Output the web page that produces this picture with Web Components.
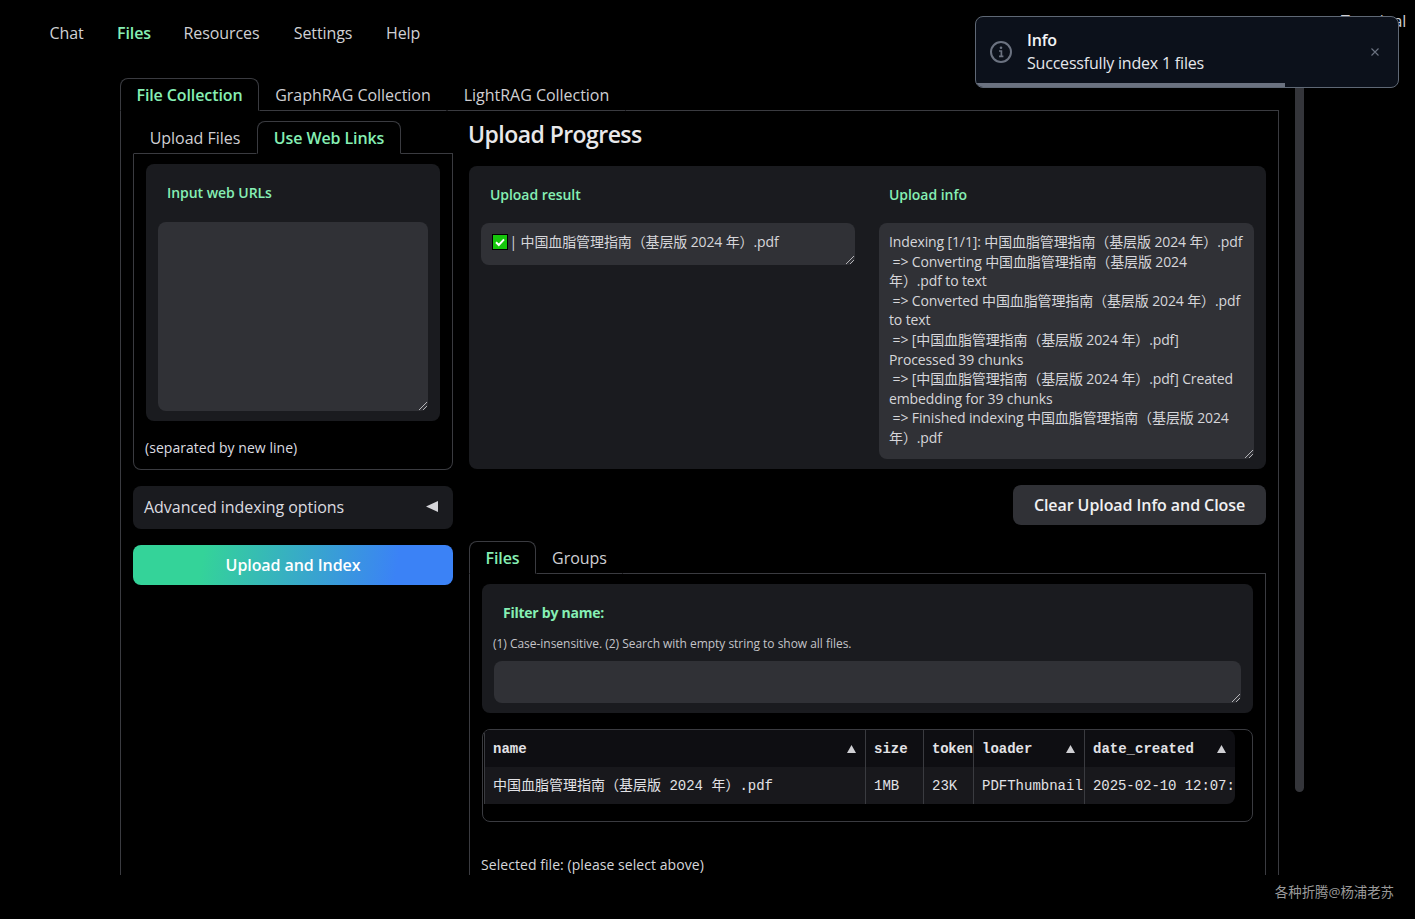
<!DOCTYPE html>
<html lang="zh">
<head>
<meta charset="utf-8">
<title>Files</title>
<style>
html,body{margin:0;padding:0;background:#000;}
</style>
</head>
<body>
<x-page>
  <x-nav>
    <x-nav-item style="width:35px">Chat</x-nav-item>
    <x-nav-item active style="width:33px">Files</x-nav-item>
    <x-nav-item style="width:77px">Resources</x-nav-item>
    <x-nav-item style="width:60px">Settings</x-nav-item>
    <x-nav-item style="width:33px">Help</x-nav-item>
    <x-nav-item slot="end" style="width:64px">Terminal</x-nav-item>
  </x-nav>
  <x-workspace>
    <x-tabs style="width:1159px">
      <x-tab slot="tab" active style="width:139px">File Collection</x-tab>
      <x-tab slot="tab" style="width:188px">GraphRAG Collection</x-tab>
      <x-tab slot="tab" style="width:179px">LightRAG Collection</x-tab>
      <x-columns>
        <x-stack slot="left">
          <x-tabs closed>
            <x-tab slot="tab" style="width:124px">Upload Files</x-tab>
            <x-tab slot="tab" active style="width:144px">Use Web Links</x-tab>
            <x-block>
              <x-label>Input web URLs</x-label>
              <x-textbox style="height:189px"></x-textbox>
            </x-block>
            <x-hint>(separated by new line)</x-hint>
          </x-tabs>
          <x-accordion>Advanced indexing options</x-accordion>
          <x-button primary>Upload and Index</x-button>
        </x-stack>
        <x-stack slot="right">
          <x-heading>Upload Progress</x-heading>
          <x-block>
            <x-two-up>
              <div>
                <x-label style="padding-bottom:18px">Upload result</x-label>
                <x-textbox style="height:42px"><x-check></x-check> | 中国血脂管理指南（基层版 2024 年）.pdf</x-textbox>
              </div>
              <div>
                <x-label style="padding-bottom:18px;padding-left:10px">Upload info</x-label>
                <x-textbox style="height:236px">Indexing [1/1]: 中国血脂管理指南（基层版 2024 年）.pdf
 =&gt; Converting 中国血脂管理指南（基层版 2024
年）.pdf to text
 =&gt; Converted 中国血脂管理指南（基层版 2024 年）.pdf
to text
 =&gt; [中国血脂管理指南（基层版 2024 年）.pdf]
Processed 39 chunks
 =&gt; [中国血脂管理指南（基层版 2024 年）.pdf] Created
embedding for 39 chunks
 =&gt; Finished indexing 中国血脂管理指南（基层版 2024
年）.pdf</x-textbox>
              </div>
            </x-two-up>
          </x-block>
          <x-button style="width:253px;align-self:flex-end">Clear Upload Info and Close</x-button>
          <x-tabs open-end>
            <x-tab slot="tab" active style="width:67px">Files</x-tab>
            <x-tab slot="tab" style="width:87px">Groups</x-tab>
            <x-block>
              <x-label strong style="padding-bottom:12px">Filter by name:</x-label>
              <x-info>(1) Case-insensitive. (2) Search with empty string to show all files.</x-info>
              <x-textbox style="height:42px"></x-textbox>
            </x-block>
            <x-file-table></x-file-table>
            <x-selected>Selected file: (please select above)</x-selected>
          </x-tabs>
        </x-stack>
      </x-columns>
    </x-tabs>
    <x-scrollbar></x-scrollbar>
  </x-workspace>
  <x-toast slot="over" title-text="Info">Successfully index 1 files</x-toast>
  <x-footer slot="footer">各种折腾@杨浦老苏</x-footer>
</x-page>
<script>
const SANS = '"Open Sans","Noto Sans CJK SC",sans-serif';
const MONO = '"Liberation Mono","Noto Sans CJK SC",monospace';
const LINE = '#3a3b40';
const GREEN = '#86efb4';
function def(name, html){
  customElements.define(name, class extends HTMLElement{
    constructor(){
      super();
      this.attachShadow({mode:'open'}).innerHTML = typeof html === 'function' ? html(this) : html;
    }
  });
}
def('x-page', `<style>
:host{display:block;position:relative;height:919px;overflow:hidden;background:#000;color:#dcdce0;font:400 16px/20px ${SANS};}
.app{height:878px;overflow:hidden;}
</style><div class="app"><slot></slot></div><slot name="over"></slot><slot name="footer"></slot>`);
def('x-nav', `<style>
:host{display:flex;align-items:center;gap:33px;height:66px;margin-bottom:12px;padding:0 10px 0 49px;}
.end{margin-left:auto;align-self:flex-start;margin-top:11px;}
</style><slot></slot><div class="end"><slot name="end"></slot></div>`);
def('x-nav-item', `<style>
:host{display:block;text-align:center;white-space:nowrap;font-size:16px;color:#d0d0d4;letter-spacing:-.1px;}
:host([active]){color:${GREEN};font-weight:600;}
</style><slot></slot>`);
def('x-workspace', `<style>
:host{display:flex;align-items:flex-start;margin-left:120px;}
</style><slot></slot>`);
def('x-scrollbar', `<style>
:host{display:block;width:9px;height:714px;margin-left:16px;background:#34353a;border-radius:0 0 5px 5px;}
</style>`);
def('x-tabs', `<style>
:host{display:block;box-sizing:border-box;}
.bar{display:flex;height:33px;}
.fill{flex:1;border-bottom:1px solid ${LINE};}
.body{border:1px solid ${LINE};border-top:0;border-bottom:0;padding:10px 12px 0;}
:host([closed]) .body{border-bottom:1px solid ${LINE};border-radius:0 0 8px 8px;padding-bottom:11px;}
</style><div class="bar"><slot name="tab"></slot><div class="fill"></div></div><div class="body"><slot></slot></div>`);
def('x-tab', `<style>
:host{display:block;box-sizing:border-box;height:33px;line-height:32px;text-align:center;white-space:nowrap;color:#cfcfd3;font-size:16px;border:1px solid transparent;border-bottom-color:${LINE};letter-spacing:-.03px;}
:host([active]){color:${GREEN};font-weight:600;border-color:${LINE};border-bottom-color:transparent;border-radius:8px 8px 0 0;letter-spacing:-.1px;}
</style><slot></slot>`);
def('x-columns', `<style>
:host{display:grid;grid-template-columns:320px 797px;gap:16px;}
</style><slot name="left"></slot><slot name="right"></slot>`);
def('x-stack', `<style>
:host{display:flex;flex-direction:column;gap:16px;min-width:0;}
</style><slot></slot>`);
def('x-two-up', `<style>
:host{display:grid;grid-template-columns:374px 375px;gap:24px;}
::slotted(div){min-width:0;}
</style><slot></slot>`);
def('x-block', `<style>
:host{display:block;background:#1a1b1f;border-radius:8px;padding:0 12px 10px;}
</style><slot></slot>`);
def('x-label', `<style>
:host{display:block;padding:19px 0 19px 9px;font-size:14px;line-height:20px;font-weight:600;color:${GREEN};letter-spacing:-.05px;}
:host([strong]){font-weight:700;letter-spacing:-.25px;}
</style><slot></slot>`);
def('x-hint', `<style>
:host{display:block;margin:17px 0 0 -1px;font-size:14px;line-height:20px;color:#dcdce0;letter-spacing:.04px;}
</style><slot></slot>`);
def('x-info', `<style>
:host{display:block;margin:0 0 9px -1px;font-size:12px;line-height:17px;color:#c4c4c9;white-space:nowrap;letter-spacing:-.03px;}
</style><slot></slot>`);
def('x-textbox', `<style>
:host{display:block;position:relative;box-sizing:border-box;background:#303136;border-radius:8px;padding:9px 10px 0;font-size:14px;line-height:19.6px;color:#d6d6da;white-space:pre;overflow:hidden;letter-spacing:-.12px;}
svg{position:absolute;right:1px;bottom:1px;width:8px;height:8px;}
</style><slot></slot><svg viewBox="0 0 8 8" aria-hidden="true"><path d="M8 0L0 8M8 4L4 8" stroke="#b4b4b8" stroke-width="1" fill="none"/></svg>`);
def('x-check', `<style>
:host{display:inline-block;width:16px;height:16px;vertical-align:-3px;margin:0 -2px 0 1px;}
svg{display:block;}
</style><svg width="16" height="16" viewBox="0 0 16 16" aria-hidden="true"><rect x=".5" y=".5" width="15" height="15" fill="#16c60c" stroke="#000"/><path d="M4 8.2L6.8 11L12 5.4" fill="none" stroke="#fff" stroke-width="2"/></svg>`);
def('x-heading', `<style>
:host{display:block;height:29px;margin-left:-1px;font-size:23px;line-height:27px;font-weight:600;color:#e8e8ea;letter-spacing:-.55px;white-space:nowrap;}
</style><slot></slot>`);
def('x-accordion', `<style>
:host{display:flex;align-items:center;justify-content:space-between;box-sizing:border-box;height:43px;padding:0 15px 2px 11px;background:#1a1b1f;border-radius:8px;font-size:16px;color:#dcdce0;letter-spacing:-.04px;}
svg{display:block;}
</style><slot></slot><svg width="12" height="11" viewBox="0 0 12 11" aria-hidden="true"><polygon points="12,0 12,11 0,5.5" fill="#d4d4d8"/></svg>`);
def('x-button', `<style>
:host{display:flex;align-items:center;justify-content:center;box-sizing:border-box;height:40px;background:#303136;border-radius:8px;font-size:16px;font-weight:600;color:#f0f0f2;white-space:nowrap;letter-spacing:-.08px;}
:host([primary]){background:linear-gradient(100deg,#34d399 22%,#3b82f6 82%);color:#fff;}
</style><slot></slot>`);
def('x-selected', `<style>
:host{display:block;margin:33px 0 0 -1px;font-size:14px;line-height:20px;color:#d6d6da;white-space:nowrap;letter-spacing:.06px;}
</style><slot></slot>`);
const tri = `<svg width="9" height="8" viewBox="0 0 9 8" aria-hidden="true"><polygon points="4.5,0 9,8 0,8" fill="#cfcfd3"/></svg>`;
def('x-file-table', `<style>
:host{display:block;box-sizing:border-box;height:93px;margin-top:16px;padding-left:1px;border:1px solid ${LINE};border-radius:8px;overflow:hidden;}
.wrap{width:751px;border-radius:0 8px 8px 0;overflow:hidden;}
table{table-layout:fixed;width:751px;border-collapse:separate;border-spacing:0;font:14px/20px ${MONO};color:#e2e2e6;}
th,td{height:37px;box-sizing:border-box;padding:0 0 0 8px;border-left:1px solid ${LINE};white-space:nowrap;overflow:hidden;text-align:left;}
th{background:#0e0e12;font-weight:700;}
td{background:#18181c;}
.tight{letter-spacing:-.25px;}
.fit{letter-spacing:-.06px;}
.h{display:flex;align-items:center;justify-content:space-between;padding-right:8px;}
.h svg{margin-right:1px;}
</style><div class="wrap"><table>
<colgroup><col style="width:381px"><col style="width:58px"><col style="width:50px"><col style="width:111px"><col style="width:151px"></colgroup>
<thead><tr>
<th><div class="h"><span>name</span>${tri}</div></th>
<th>size</th>
<th class="tight">token</th>
<th><div class="h"><span>loader</span>${tri}</div></th>
<th><div class="h"><span>date_created</span>${tri}</div></th>
</tr></thead>
<tbody><tr>
<td>中国血脂管理指南（基层版 2024 年）.pdf</td>
<td>1MB</td>
<td>23K</td>
<td>PDFThumbnail</td>
<td class="fit">2025-02-10 12:07:</td>
</tr></tbody></table></div>`);
def('x-toast', el => `<style>
:host{position:absolute;left:975px;top:16px;width:424px;height:72px;box-sizing:border-box;display:flex;align-items:flex-start;background:#0c111b;border:1px solid #5f6875;border-radius:8px;overflow:hidden;color:#e5e7eb;}
.icon{display:block;margin:23px 0 0 13px;flex:none;}
.text{margin:12px 0 0 14px;flex:1;font-size:16px;line-height:23px;white-space:nowrap;letter-spacing:-.2px;}
.title{font-weight:600;color:#f3f4f6;}
.close{display:block;margin:31px 19px 0 0;flex:none;}
.bar{position:absolute;left:0;bottom:0;width:309px;height:4px;background:#6b7280;}
</style>
<svg class="icon" width="24" height="24" viewBox="0 0 24 24" aria-hidden="true"><circle cx="12" cy="12" r="10" fill="none" stroke="#6b7280" stroke-width="2"/><circle cx="12" cy="7.8" r="1.3" fill="#6b7280"/><path d="M10 11h2.4v5M10 16.4h4.4" fill="none" stroke="#6b7280" stroke-width="1.7"/></svg>
<div class="text"><div class="title">${el.getAttribute('title-text')||'Info'}</div><slot></slot></div>
<svg class="close" width="8" height="8" viewBox="0 0 8 8" aria-hidden="true"><path d="M.5 .5L7.5 7.5M7.5 .5L.5 7.5" stroke="#6b7280" stroke-width="1.1" fill="none"/></svg>
<div class="bar"></div>`);
def('x-footer', `<style>
:host{display:block;height:41px;box-sizing:border-box;padding-right:21px;text-align:right;font-size:13.4px;line-height:28px;color:#9a9a9a;}
</style><slot></slot>`);
</script>
</body>
</html>
